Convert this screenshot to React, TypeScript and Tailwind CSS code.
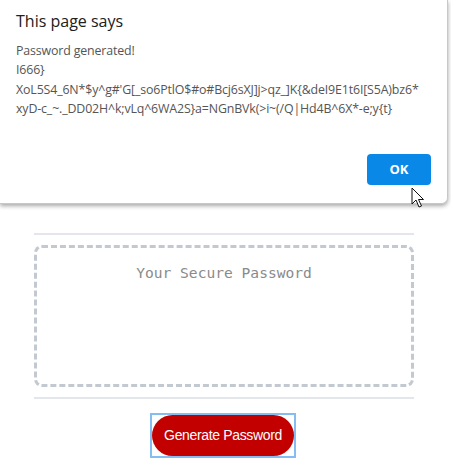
export default function App() {
  return (
    <div className="relative w-[451px] h-[462px] overflow-hidden bg-white font-['Liberation_Sans',Arial,sans-serif]">
      <div className="pt-[233px] w-[380px] ml-[34px] flex flex-col">
        <div className="h-[2px] bg-[#e3e6ea]" />
        <div className="mt-[10px] h-[142px] rounded-lg border-[3px] border-dashed border-[#c3c9d1] flex justify-center pt-[14px]">
          <span className="font-['DejaVu_Sans_Mono',monospace] text-[14.6px] text-[#8a8a8a] h-fit">
            Your Secure Password
          </span>
        </div>
        <div className="mt-[10px] h-[2px] bg-[#e3e6ea]" />
        <div className="mt-[16px] flex justify-center">
          <div className="outline-2 outline-[#84bdf2] -ml-[2px]">
            <button className="h-[41px] w-[142px] rounded-full bg-[#c20000] text-white text-[14px] tracking-tight">
              Generate Password
            </button>
          </div>
        </div>
      </div>

      <div className="absolute left-0 top-0 w-[448px] h-[204px] bg-white rounded-br-md border-r border-b border-[#c8c8c8] shadow-[0_2px_4px_rgba(0,0,0,0.35)] font-['Open_Sans','Noto_Sans',sans-serif] flex flex-col px-4">
        <div className="mt-[9px] text-[16px] text-[#202020]">This page says</div>
        <div className="mt-[8px] text-[12.4px] leading-[19.3px] text-[#555] tracking-[-0.15px]">
          <div>Password generated!</div>
          <div>I666&#125;</div>
          <div>XoL5S4_6N*$y^g#'G[_so6PtlO$#o#Bcj6sXJ]j&gt;qz_]K&#123;&amp;deI9E1t6I[S5A)bz6*</div>
          <div>xyD-c_~._DD02H^k;vLq^6WA2S&#125;a=NGnBVk(&gt;i~(/Q|Hd4B^6X*-e;y&#123;t&#125;</div>
        </div>
        <div className="mt-auto mb-[18px] flex justify-end">
          <button className="w-[64px] h-[31px] rounded-[4px] bg-[#0a88e8] text-white text-[13px] font-bold">
            OK
          </button>
        </div>
      </div>

      <svg className="absolute left-[411px] top-[187px]" width="14" height="22" viewBox="0 0 14 22">
        <path d="M1 1 L1 17 L5 13 L8 20 L10.5 19 L7.5 12.5 L12.5 12.5 Z" fill="white" stroke="#111" strokeWidth="1" strokeLinejoin="miter" />
      </svg>
    </div>
  );
}
